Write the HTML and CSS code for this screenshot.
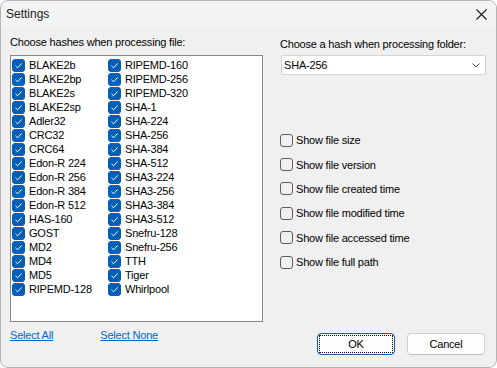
FILE: index.html
```html
<!DOCTYPE html>
<html lang="en">
<head>
  <meta charset="UTF-8" />
  <title>Settings</title>
  <link rel="stylesheet" href="styles.css">
</head>
<body>

  <div class="window">
    <!-- Title bar -->
    <div class="titlebar">
      <span class="title">Settings</span>
      <svg class="close" width="11" height="11" viewBox="0 0 11 11">
        <path d="M0.5 0.5 L10.5 10.5 M10.5 0.5 L0.5 10.5" stroke="#1a1a1a" stroke-width="1.1" fill="none"/>
      </svg>
    </div>

    <div class="content">
      <!-- Left: file hashes -->
      <div class="col-left">
        <div class="label">Choose hashes when processing file:</div>
        <div class="listbox">
          <div class="list-col" id="col1"></div>
          <div class="list-col" id="col2"></div>
        </div>
        <div class="links">
          <a class="link" href="#">Select All</a>
          <a class="link" href="#">Select None</a>
        </div>
      </div>

      <!-- Right: folder hash + options -->
      <div class="col-right">
        <div class="label">Choose a hash when processing folder:</div>
        <div class="select">
          <span>SHA-256</span>
          <svg width="8" height="5" viewBox="0 0 8 5">
            <path d="M0.5 0.5 L4 4 L7.5 0.5" stroke="#5a5a5a" stroke-width="1" fill="none"/>
          </svg>
        </div>
        <div class="options" id="options"></div>
        <div class="buttons">
          <button class="btn default"><span>OK</span></button>
          <button class="btn">Cancel</button>
        </div>
      </div>
    </div>
  </div>

  <script>
    const left = ["BLAKE2b", "BLAKE2bp", "BLAKE2s", "BLAKE2sp", "Adler32", "CRC32", "CRC64",
      "Edon-R 224", "Edon-R 256", "Edon-R 384", "Edon-R 512", "HAS-160", "GOST", "MD2", "MD4", "MD5", "RIPEMD-128"];
    const right = ["RIPEMD-160", "RIPEMD-256", "RIPEMD-320", "SHA-1", "SHA-224", "SHA-256", "SHA-384",
      "SHA-512", "SHA3-224", "SHA3-256", "SHA3-384", "SHA3-512", "Snefru-128", "Snefru-256", "TTH", "Tiger", "Whirlpool"];
    const options = ["Show file size", "Show file version", "Show file created time",
      "Show file modified time", "Show file accessed time", "Show file full path"];

    const check = '<svg width="13" height="13" viewBox="0 0 13 13"><path d="M3.5 6.8 L5.6 8.8 L9.6 4.4" stroke="#fff" stroke-width="1" fill="none"/></svg>';

    function fill(id, items) {
      const col = document.getElementById(id);
      items.forEach(name => {
        const row = document.createElement('div');
        row.className = 'item';
        row.innerHTML = '<span class="box checked">' + check + '</span><span>' + name + '</span>';
        col.appendChild(row);
      });
    }

    fill('col1', left);
    fill('col2', right);

    const opts = document.getElementById('options');
    options.forEach(name => {
      const row = document.createElement('div');
      row.className = 'option';
      row.innerHTML = '<span class="box"></span><span>' + name + '</span>';
      opts.appendChild(row);
    });
  </script>

</body>
</html>
```

FILE: styles.css
```css
body {
  margin: 0;
  background: #ffffff;
  font-family: "Liberation Sans", Arial, sans-serif;
  font-size: 11px;
  letter-spacing: -0.2px;
  color: #000;
}

.window {
  width: 497px;
  height: 368px;
  box-sizing: border-box;
  border: 1px solid #b4b4b4;
  border-radius: 8px;
  background: #f0f0f0;
  overflow: hidden;
  display: flex;
  flex-direction: column;
}

.titlebar {
  height: 26px;
  background: #f3f3f3;
  display: flex;
  align-items: center;
  justify-content: space-between;
  padding: 0 9px 0 5px;
  flex-shrink: 0;
}

.title {
  font-size: 12px;
  letter-spacing: 0;
  color: #1a1a1a;
}

.close {
  margin-top: 1px;
}

.content {
  flex: 1;
  display: flex;
  gap: 17px;
  padding: 7px 10px 12px 9px;
}

.col-left {
  width: 253px;
  display: flex;
  flex-direction: column;
}

.col-right {
  flex: 1;
  display: flex;
  flex-direction: column;
}

.label {
  line-height: 16px;
  margin-bottom: 5px;
}

.col-right .label {
  margin-top: 2px;
  margin-bottom: 3px;
}

.listbox {
  height: 267px;
  box-sizing: border-box;
  border: 1px solid #828790;
  background: #fff;
  display: flex;
  padding: 2px 1px;
}

.list-col {
  display: flex;
  flex-direction: column;
}

.list-col:first-child {
  width: 96px;
}

.item {
  height: 14px;
  display: flex;
  align-items: center;
  gap: 4px;
  line-height: 14px;
  white-space: nowrap;
}

.box {
  width: 13px;
  height: 13px;
  box-sizing: border-box;
  border-radius: 3px;
  border: 1px solid #5d5d5d;
  flex-shrink: 0;
  display: inline-block;
}

.box.checked {
  background: #005fb8;
  border-color: #005fb8;
  position: relative;
}

.box.checked svg {
  position: absolute;
  left: -1px;
  top: -1px;
}

.links {
  display: flex;
  gap: 47px;
  padding-top: 5px;
  line-height: 16px;
}

.link {
  color: #0066cc;
  text-decoration: underline;
}

.select {
  height: 20px;
  box-sizing: border-box;
  border: 1px solid #d4d4d4;
  border-radius: 2px;
  background: #fff;
  display: flex;
  align-items: center;
  justify-content: space-between;
  padding: 0 5px 0 2px;
  margin-left: 1px;
}

.options {
  margin-top: 53px;
  display: flex;
  flex-direction: column;
}

.option {
  height: 24.4px;
  display: flex;
  align-items: center;
  gap: 3px;
  white-space: nowrap;
}

.buttons {
  margin-top: auto;
  display: flex;
  justify-content: flex-end;
  gap: 12px;
  padding-right: 1px;
}

.btn {
  width: 78px;
  height: 22px;
  box-sizing: border-box;
  border: 1px solid #d0d0d0;
  border-bottom-color: #bdbdbd;
  border-radius: 4px;
  background: #fdfdfd;
  font-family: "Liberation Sans", Arial, sans-serif;
  font-size: 11px;
  letter-spacing: -0.2px;
  color: #000;
  padding: 0;
}

.btn.default {
  border: 1px solid #1d5fa8;
  padding: 1px;
}

.btn.default span {
  display: flex;
  align-items: center;
  justify-content: center;
  height: 100%;
  border: 1px dotted #000;
  box-sizing: border-box;
}
```
